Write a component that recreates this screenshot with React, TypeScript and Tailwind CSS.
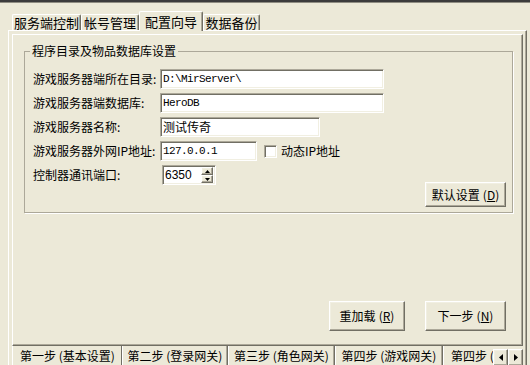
const raised =
  "bg-[#ece9d8] border border-white border-r-[#716f64] border-b-[#716f64] shadow-[inset_-1px_-1px_0_#aca899,inset_1px_1px_0_#f1efe2]";
const sunken =
  "bg-white border border-[#aca899] border-r-white border-b-white shadow-[inset_1px_1px_0_#716f64,inset_-1px_-1px_0_#f1efe2]";
const mono = "[font-family:'Liberation_Mono','Noto_Sans_CJK_SC',monospace] text-[11px] tracking-[-0.6px]";

function TopTab({ label, w, active }: { label: string; w: string; active?: boolean }) {
  if (active) {
    return (
      <div
        className={`${w} h-[20px] -mb-px relative z-10 bg-[#ece9d8] border-t border-l border-white border-r border-r-[#716f64] shadow-[inset_-1px_0_0_#aca899] rounded-t-[2px] flex items-center justify-center pb-[1px] text-[13px] leading-[15px]`}
      >
        {label}
      </div>
    );
  }
  return (
    <div
      className={`${w} h-[16px] border-t border-l border-white border-r border-r-[#716f64] shadow-[inset_-1px_0_0_#aca899] rounded-t-[2px] flex items-center justify-center text-[13px] leading-[15px]`}
    >
      {label}
    </div>
  );
}

function StepTab({ label, w, left }: { label: string; w: string; left?: boolean }) {
  return (
    <div
      className={`${w} shrink-0 h-[20px] border-l border-white border-r border-r-[#716f64] border-b border-b-[#716f64] shadow-[inset_-1px_0_0_#aca899] flex items-center whitespace-nowrap overflow-hidden ${left ? "justify-start pl-[7px]" : "justify-center"}`}
    >
      {label}
    </div>
  );
}

function Row({ label, children }: { label: string; children: React.ReactNode }) {
  return (
    <div className="h-[20px] flex items-center mb-[4px]">
      <div className="w-[127px] shrink-0 whitespace-nowrap">{label}</div>
      {children}
    </div>
  );
}

function Btn({ text, k, w, h }: { text: string; k: string; w: string; h: string }) {
  return (
    <div className={`${raised} ${w} ${h} flex items-center justify-center whitespace-nowrap`}>
      {text}
      <span className="ml-[3px]">
        (<span className="underline">{k}</span>)
      </span>
    </div>
  );
}

export default function App() {
  return (
    <div className="w-[530px] h-[365px] overflow-hidden bg-[#ece9d8] flex flex-col text-black [font-family:'Noto_Sans_CJK_SC',sans-serif] text-[12px] leading-[14px]">
      <div className="h-[2px] shrink-0 bg-[#3c3c3c]" />
      <div className="h-[1px] shrink-0 bg-[#8f8d82]" />

      {/* top tabs */}
      <div className="h-[27px] shrink-0 flex items-end pl-[12px]">
        <TopTab w="w-[69px]" label="服务端控制" />
        <TopTab w="w-[58px]" label="帐号管理" />
        <TopTab w="w-[64px]" label="配置向导" active />
        <TopTab w="w-[57px]" label="数据备份" />
      </div>

      {/* outer page */}
      <div className="flex-1 min-h-0 ml-[8px] mr-[3px] border-l border-t border-white border-r border-r-[#716f64] shadow-[inset_-1px_0_0_#aca899] pt-[3px] pl-[3px] pr-[3px] flex flex-col">
        {/* wizard page */}
        <div className="h-[312px] shrink-0 flex flex-col border-l border-t border-white border-r border-r-[#716f64] border-b border-b-[#716f64] shadow-[inset_-1px_-1px_0_#aca899]">
          <fieldset className="mt-[9px] ml-[11px] mr-[9px] border border-[#aca899] shadow-[1px_1px_0_#ffffff]">
            <legend className="ml-[5px] px-[2px] leading-[14px]">程序目录及物品数据库设置</legend>
            <div className="pl-[8px] pr-[6px] pt-[11px] pb-[5px] flex flex-col">
              <Row label="游戏服务器端所在目录:">
                <div className={`${sunken} w-[224px] h-[20px] pl-[2px] flex items-center ${mono}`}>D:\MirServer\</div>
              </Row>
              <Row label="游戏服务器端数据库:">
                <div className={`${sunken} w-[224px] h-[20px] pl-[2px] flex items-center ${mono}`}>HeroDB</div>
              </Row>
              <Row label="游戏服务器名称:">
                <div className={`${sunken} w-[160px] h-[20px] pl-[2px] flex items-center`}>测试传奇</div>
              </Row>
              <Row label="游戏服务器外网IP地址:">
                <div className={`${sunken} w-[97px] h-[20px] pl-[2px] flex items-center ${mono}`}>127.0.0.1</div>
                <div className={`${sunken} ml-[7px] w-[13px] h-[13px]`} />
                <span className="ml-[4px]">动态IP地址</span>
              </Row>
              <div className="flex items-start">
                <div className="h-[20px] flex items-center">
                  <div className="w-[129px] shrink-0">控制器通讯端口:</div>
                  <div className={`${sunken} w-[54px] h-[20px] flex items-center pl-[2px] pr-[2px]`}>
                    <span className="flex-1 [font-family:'Liberation_Sans',sans-serif] text-[12px]">6350</span>
                    <div className="w-[12px] h-[16px] flex flex-col">
                      <div className={`${raised} h-[8px] flex items-center justify-center`}>
                        <svg width="5" height="3" viewBox="0 0 5 3"><path d="M2.5 0 L5 3 L0 3 Z" fill="#000" /></svg>
                      </div>
                      <div className={`${raised} h-[8px] flex items-center justify-center`}>
                        <svg width="5" height="3" viewBox="0 0 5 3"><path d="M0 0 L5 0 L2.5 3 Z" fill="#000" /></svg>
                      </div>
                    </div>
                  </div>
                </div>
                <div className="ml-auto mt-[17px]">
                  <Btn text="默认设置" k="D" w="w-[81px]" h="h-[25px]" />
                </div>
              </div>
            </div>
          </fieldset>

          <div className="mt-auto pb-[14px] pr-[16px] flex justify-end gap-[20px]">
            <Btn text="重加载" k="R" w="w-[76px]" h="h-[30px]" />
            <Btn text="下一步" k="N" w="w-[81px]" h="h-[30px]" />
          </div>
        </div>

        {/* step tabs */}
        <div className="h-[22px] shrink-0 flex items-start">
          <div className="flex-1 min-w-0 flex overflow-hidden">
            <div className="w-[110px] shrink-0 h-[21px] -mt-px relative z-10 bg-[#ece9d8] border-l border-white border-r border-r-[#716f64] flex items-center pl-[7px] whitespace-nowrap">
              第一步 (基本设置)
            </div>
            <StepTab w="w-[106px]" label="第二步 (登录网关)" />
            <StepTab w="w-[107px]" label="第三步 (角色网关)" />
            <StepTab w="w-[108px]" label="第四步 (游戏网关)" />
            <StepTab w="w-[108px]" label="第四步 (..." left />
          </div>
          <div className="flex mt-[3px]">
            <div className={`${raised} w-[15px] h-[17px] flex items-center justify-center`}>
              <svg width="4" height="7" viewBox="0 0 4 7"><path d="M4 0 L4 7 L0 3.5 Z" fill="#000" /></svg>
            </div>
            <div className={`${raised} w-[15px] h-[17px] flex items-center justify-center`}>
              <svg width="4" height="7" viewBox="0 0 4 7"><path d="M0 0 L4 3.5 L0 7 Z" fill="#000" /></svg>
            </div>
          </div>
        </div>
      </div>
    </div>
  );
}
